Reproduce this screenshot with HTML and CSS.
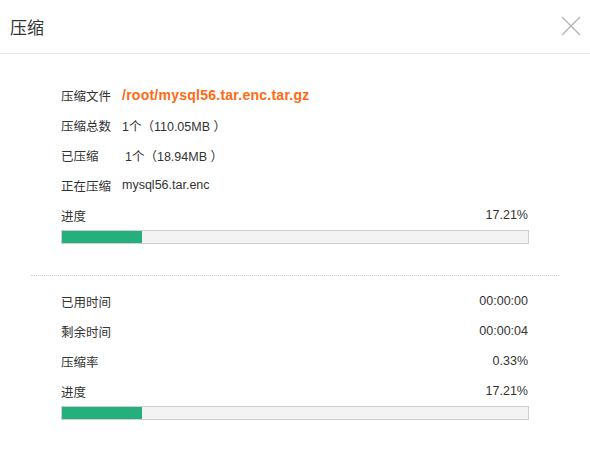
FILE: index.html
```html
<!DOCTYPE html>
<html lang="zh-CN">
<head>
<meta charset="utf-8">
<title>压缩</title>
<link rel="stylesheet" href="styles.css">
</head>
<body>
<div class="dialog">
  <div class="header">
    <span class="title">压缩</span>
    <svg class="close" width="20" height="20" viewBox="0 0 20 20" aria-hidden="true">
      <path d="M1 1 L19 19 M19 1 L1 19" stroke="#b4b4b4" stroke-width="1.4" fill="none"/>
    </svg>
  </div>
  <div class="section first">
    <div class="row"><span class="label">压缩文件</span><span class="path">/root/mysql56.tar.enc.tar.gz</span></div>
    <div class="row"><span class="label">压缩总数</span><span>1个（110.05MB&nbsp;）</span></div>
    <div class="row"><span class="label">已压缩</span><span class="shift">1个（18.94MB&nbsp;）</span></div>
    <div class="row"><span class="label">正在压缩</span><span>mysql56.tar.enc</span></div>
    <div class="row split"><span>进度</span><span>17.21%</span></div>
    <div class="bar"><div class="fill" style="width:17.21%"></div></div>
  </div>
  <div class="divider"></div>
  <div class="section second">
    <div class="row split"><span>已用时间</span><span>00:00:00</span></div>
    <div class="row split"><span>剩余时间</span><span>00:00:04</span></div>
    <div class="row split"><span>压缩率</span><span>0.33%</span></div>
    <div class="row split"><span>进度</span><span>17.21%</span></div>
    <div class="bar"><div class="fill" style="width:17.21%"></div></div>
  </div>
</div>
</body>
</html>
```
FILE: styles.css
```css
html, body {
  margin: 0;
  padding: 0;
  background: #fff;
}
body {
  font-family: "Liberation Sans", "Noto Sans CJK SC", sans-serif;
  font-size: 12.5px;
  color: #333;
}
.dialog {
  width: 590px;
}
.header {
  height: 54px;
  border-bottom: 1px solid #e6e6e6;
  display: flex;
  align-items: center;
  justify-content: space-between;
  padding: 0 9px 0 10px;
  box-sizing: border-box;
}
.title {
  font-size: 17px;
  color: #333;
  margin-top: -1px;
}
.close {
  display: block;
  margin-top: -2px;
}
.section {
  padding: 0 61px;
}
.section.first {
  padding-top: 26px;
}
.section.second {
  padding-top: 10px;
}
.row {
  height: 30px;
  display: flex;
  align-items: center;
  white-space: nowrap;
}
.row.split {
  justify-content: space-between;
  padding-right: 1px;
}
.label {
  width: 61px;
  flex: none;
}
.shift {
  padding-left: 3px;
}
.path {
  color: #ff6a13;
  font-weight: bold;
  font-size: 14px;
  letter-spacing: 0.25px;
}
.bar {
  height: 14px;
  border: 1px solid #cfcfcf;
  background: #f3f3f3;
  box-sizing: border-box;
}
.fill {
  height: 100%;
  background: #23b07d;
}
.divider {
  margin: 31px 31px 0;
  border-top: 1px dotted #cfcfcf;
}
```
